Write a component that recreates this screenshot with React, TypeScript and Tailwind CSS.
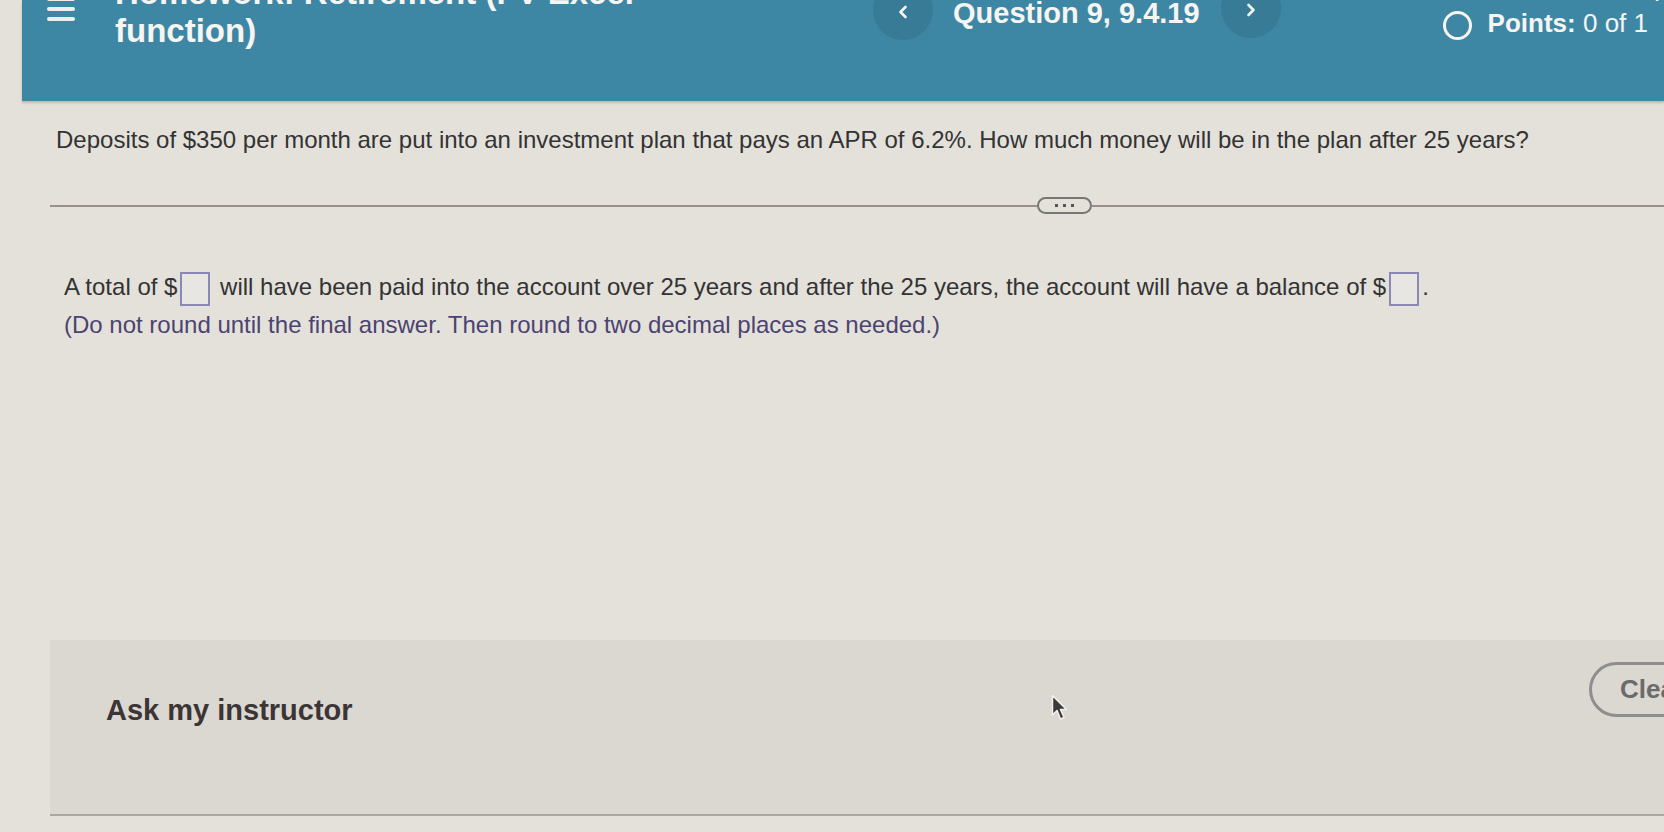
import React from 'react'

function Chevron({ dir }: { dir: 'left' | 'right' }) {
  return (
    <svg width="10" height="14" viewBox="0 0 10 14" className="mt-[3px]">
      <path
        d={dir === 'left' ? 'M7.5 2 L2.5 7 L7.5 12' : 'M2.5 2 L7.5 7 L2.5 12'}
        fill="none"
        stroke="#f4f4f0"
        strokeWidth="2.6"
        strokeLinecap="round"
        strokeLinejoin="round"
      />
    </svg>
  )
}

function AnswerBox() {
  return (
    <span className="inline-block w-[30px] h-[34px] mx-[3px] align-middle border-2 border-[#8c88b6] bg-[#e8e6e2]" />
  )
}

export default function App() {
  return (
    <div className="relative w-[1664px] h-[832px] overflow-hidden bg-[#e4e1db] font-['Liberation_Sans',Arial,sans-serif]">
      {/* top bar */}
      <header className="ml-[22px] h-[101px] flex items-start bg-[#3e87a4] text-[#f6f5f1] shadow-[0_2px_2px_rgba(0,0,0,0.18)]">
        <div className="ml-[25px] -mt-[3px] flex flex-col gap-[6px] shrink-0">
          <span className="block w-[28px] h-[4px] rounded-full bg-[#eeeeea]" />
          <span className="block w-[28px] h-[4px] rounded-full bg-[#eeeeea]" />
          <span className="block w-[28px] h-[4px] rounded-full bg-[#eeeeea]" />
        </div>

        <div className="ml-[40px] -mt-[26px] w-[758px] shrink-0 text-[33px] font-bold leading-[38px]">
          <div>Homework: Retirement (FV Excel</div>
          <div>function)</div>
        </div>

        <div className="flex items-start shrink-0">
          <button className="-mt-[20px] w-[60px] h-[60px] rounded-full bg-[#2f6a82]/40 flex items-center justify-center">
            <Chevron dir="left" />
          </button>
          <div className="ml-[20px] -mt-[4px] text-[29px] font-bold leading-[34px] whitespace-nowrap">
            Question 9, 9.4.19
          </div>
          <button className="ml-[21px] -mt-[22px] w-[60px] h-[60px] rounded-full bg-[#2f6a82]/40 flex items-center justify-center">
            <Chevron dir="right" />
          </button>
        </div>

        <div className="ml-[162px] -mt-[27px] flex flex-col shrink-0">
          <div className="ml-[35px] text-[26px] font-bold leading-[30px] whitespace-nowrap">
            HW Score: 0%, 0 of 14 points
          </div>
          <div className="mt-[5px] flex items-start">
            <span className="mt-[3px] block w-[29px] h-[29px] rounded-full border-[3px] border-[#f6f5f1]" />
            <span className="ml-[16px] text-[26px] leading-[30px] whitespace-nowrap">
              <span className="font-bold">Points:</span> 0 of 1
            </span>
          </div>
        </div>
      </header>

      {/* question */}
      <p className="mt-[25px] pl-[56px] text-[24px] leading-[28px] text-[#333333] whitespace-nowrap">
        Deposits of $350 per month are put into an investment plan that pays an APR of 6.2%. How much money will be in the plan after 25 years?
      </p>

      <div className="ml-[50px] mt-[43px] h-[17px] flex items-center">
        <div className="w-[987px] h-[2px] bg-[#9d8e8b]" />
        <div className="w-[55px] h-[17px] rounded-full border-2 border-[#777777] flex items-center justify-center gap-[5px]">
          <span className="block w-[3px] h-[3px] bg-[#555555]" />
          <span className="block w-[3px] h-[3px] bg-[#555555]" />
          <span className="block w-[3px] h-[3px] bg-[#555555]" />
        </div>
        <div className="flex-1 h-[2px] bg-[#9d8e8b]" />
      </div>

      {/* answer */}
      <div className="mt-[54px] pl-[64px] text-[24px] leading-[37px] whitespace-nowrap">
        <div className="text-[#333333]">
          A total of $<AnswerBox /> will have been paid into the account over 25 years and after the 25 years, the account will have a balance of $<AnswerBox />.
        </div>
        <div className="text-[#4b4470]">
          (Do not round until the final answer. Then round to two decimal places as needed.)
        </div>
      </div>

      {/* footer panel */}
      <div className="ml-[50px] mt-[297px] h-[176px] flex items-start bg-[#dbd8d2] border-b-2 border-[#aaa7a2]">
        <div className="pl-[56px] pt-[53px] w-[1539px] shrink-0 text-[29px] font-bold leading-[34px] text-[#3b3535]">
          Ask my instructor
        </div>
        <button className="mt-[22px] h-[55px] shrink-0 rounded-full border-[3px] border-[#8e8e8e] px-[28px] text-[26px] font-bold text-[#6b6b6b] whitespace-nowrap">
          Clear all
        </button>
      </div>

      {/* mouse pointer */}
      <svg
        className="absolute left-[1051px] top-[694px]"
        width="18"
        height="28"
        viewBox="0 0 18 28"
      >
        <path
          d="M1.5 1.5 L1.5 21 L6 16.5 L9.5 25 L13 23.5 L9.5 15.5 L15.5 15.5 Z"
          fill="#3b3b3b"
          stroke="#f2f1ee"
          strokeWidth="1.5"
          strokeLinejoin="round"
        />
      </svg>
    </div>
  )
}
